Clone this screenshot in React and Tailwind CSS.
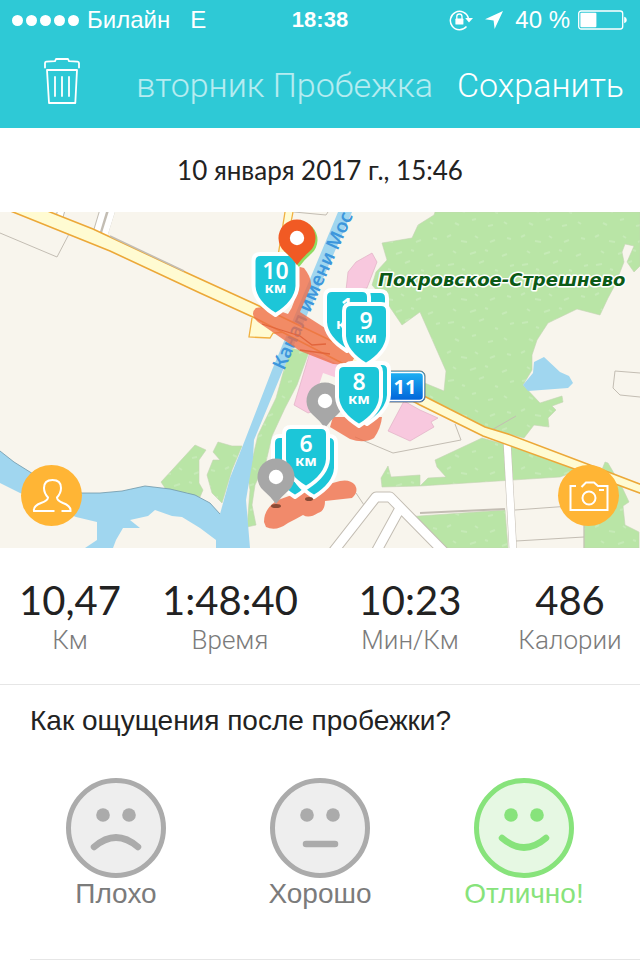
import React, { useState } from 'react';

const STATS = [
    { value: '10,47', label: 'Км' },
    { value: '1:48:40', label: 'Время' },
    { value: '10:23', label: 'Мин/Км' },
    { value: '486', label: 'Калории' },
];

const MOODS = [
    { id: 'bad', label: 'Плохо', mouth: 'M28 69 Q50 50 72 69' },
    { id: 'good', label: 'Хорошо', mouth: 'M36 66 H65' },
    { id: 'great', label: 'Отлично!', mouth: 'M28 60 Q50 79 72 60' },
];

function StatusBar() {
    return (
        <div className="grid grid-cols-[1fr_auto_1fr] items-center h-10 px-3 text-2xl leading-10">
            <div className="flex items-center gap-2">
                <div className="flex gap-[3px]">
                    {[0, 1, 2, 3, 4].map((i) => (
                        <span key={i} className="size-[11px] rounded-full bg-white" />
                    ))}
                </div>
                <span>Билайн</span>
                <span className="ml-3">E</span>
            </div>
            <div className="font-bold text-[22px] leading-10">18:38</div>
            <div className="flex items-center justify-end">
                <svg className="w-6 h-[22px] mr-3" viewBox="0 0 24 22" fill="none">
                    <path d="M17.5 17.6 A9.2 9.2 0 1 1 19.4 9" stroke="white" strokeWidth="1.5" />
                    <path d="M16.2 9 H24 L20 13.5 Z" fill="white" />
                    <rect x="6.4" y="9.6" width="8" height="6" rx="0.6" fill="white" />
                    <path d="M7.8 10 V7.6 a2.6 2.6 0 0 1 5.2 0 V10" stroke="white" strokeWidth="1.3" />
                </svg>
                <svg className="w-[18px] h-[18px] mr-3" viewBox="0 0 18 18">
                    <path d="M18 0 L9.6 18 L8.6 9.4 L0 8.2 Z" fill="white" />
                </svg>
                <span>40 %</span>
                <svg className="w-[50px] h-5 ml-2" viewBox="0 0 50 20" fill="none">
                    <rect x="0.7" y="1" width="44" height="18" rx="2.5" stroke="white" strokeWidth="1.3" />
                    <rect x="2.4" y="2.7" width="16" height="14.6" rx="1" fill="white" />
                    <path d="M46.2 6.8 q2.6 0.6 2.6 3.2 t-2.6 3.2 z" fill="white" />
                </svg>
            </div>
        </div>
    );
}

function Header() {
    return (
        <header className="bg-[#2ec9d6] text-white font-['Liberation_Sans',sans-serif]">
            <StatusBar />
            <div className="flex items-start h-[88px] pl-11 pr-4 pt-[18px] font-['Roboto',sans-serif] font-light text-[34px] leading-[54px]">
                <button type="button" aria-label="Удалить">
                    <svg className="w-9 h-[46px]" viewBox="0 0 36 46" fill="none" stroke="white" strokeWidth="1.8" strokeLinejoin="round" strokeLinecap="round">
                        <path d="M1 9.5 V5 Q1 3.8 2.2 3.6 L11 3.2 L12 1 H24 L25 3.2 L33.6 3.6 Q34.9 3.8 35 5 V9.5" />
                        <path d="M3 12 H33 L31.3 45 H5 Z" />
                        <path d="M11 19 V38 M18 19 V38 M25 19 V38" />
                    </svg>
                </button>
                <h1 className="ml-auto mr-6 text-white/65">вторник Пробежка</h1>
                <button type="button">Сохранить</button>
            </div>
        </header>
    );
}

function Shield({ x, y, km }) {
    return (
        <g transform={`translate(${x} ${y})`}>
            <path
                d="M-15 2 H15 Q22 2 22 9 V34 Q21 50 0 63 Q-21 50 -22 34 V9 Q-22 2 -15 2 Z"
                fill="#1cc6d8"
                stroke="white"
                strokeWidth="4"
                strokeLinejoin="round"
            />
            {km && (
                <text fill="white" textAnchor="middle" className="font-['Noto_Sans',sans-serif]">
                    <tspan x="0" y="27" fontSize="23" fontWeight="600">{km}</tspan>
                    <tspan x="0" y="41" fontSize="15" fontWeight="700">км</tspan>
                </text>
            )}
        </g>
    );
}

function Pin({ x, y, color }) {
    return (
        <g transform={`translate(${x} ${y})`}>
            <path d="M0 27 Q-5 20 -12.5 13.6 A18.5 18.5 0 1 1 12.5 13.6 Q5 20 0 27 Z" fill={color} />
            <circle r="7.2" fill="white" />
        </g>
    );
}

function RouteMap() {
    return (
        <svg className="block w-full" viewBox="0 212 640 336" role="img" aria-label="Маршрут пробежки">
            <defs>
                <pattern id="woods" width="74" height="58" patternUnits="userSpaceOnUse">
                    <rect width="74" height="58" fill="#b9e5a6" />
                    <path
                        d="M3 5l4 -2M17 9l6 1M31 4l3 2M46 10l5 -2M63 6l4 1M9 19l3 2M26 22l6 -2M41 18l3 1M58 24l5 -2M4 33l6 -1M18 37l3 1M35 31l5 -2M51 38l3 1M66 34l4 -1M11 49l4 2M28 46l4 -1M44 52l5 -1M60 48l3 2"
                        stroke="#c5eab6"
                        strokeWidth="2"
                    />
                </pattern>
                <linearGradient id="sign" x1="0" y1="0" x2="0" y2="1">
                    <stop offset="0" stopColor="#1fb4f4" />
                    <stop offset="1" stopColor="#0060d8" />
                </linearGradient>
            </defs>
            <rect y="212" width="640" height="336" fill="#f8f5ed" />

            {/* Woods */}
            <g fill="url(#woods)" stroke="#c5d3b4" strokeWidth="0.6">
                <path d="M435 212 L434 215 L418 225 L412 238 L382 243 L387 260 L376 272 L372 285 L385 300 L402 325 L420 312 L446 371 L444 391 L427 384 L400 372 L420 394 L485 428 L524 438 L534 425 L549 427 L548 418 L556 410 L552 406 L563 402 L562 396 L540 403 L523 385 L532 370 L532 355 L537 340 L548 323 L577 309 L600 315 L608 298 L615 285 L624 262 L622 252 L625 244 L634 246 L627 262 L634 272 L640 266 V212 Z" />
                <path d="M435 460 L482 438 L525 450 L580 470 L560 477 L420 486 L382 487 L381 478 L388 466 L391 477 L420 475 L420 486 L428 478 L446 477 L437 467 Z" />
                <path d="M405 517 L505 510 L508 548 H440 L410 522 Z" />
                <path d="M584 515 L605 462 L608 463 L622 487 L629 502 L623 506 L625 525 L639 532 V548 H584 Z" />
                <path d="M161 482 L195 445 L206 450 L199 460 V483 L203 490 L200 497 L165 488 Z" />
                <path d="M218 442 L232 446 L242 446 L232 470 L222 503 L212 493 L207 475 L213 460 H220 L213 452 Z" />
                <path d="M290 348 L309 352 L297 385 L285 408 L272 436 L266 462 L255 485 L252 505 L256 525 L247 527 L250 490 L248 478 L258 435 L276 398 Z" />
            </g>

            {/* Built-up areas */}
            <g fill="#f8c8de" stroke="#dba9bf" strokeWidth="0.6">
                <path d="M346 290 L348 272 L356 262 L372 253 L377 262 L367 288 Z" />
                <path d="M310 352 L345 368 L350 400 L308 413 L294 405 Z" />
                <path d="M404 401 L420 410 L438 418 L431 422 L434 427 L410 441 L388 431 Z" />
            </g>
            <path d="M323 373 L343 380 L338 392 L318 388 Z" fill="#f8f5ed" />

            {/* Water */}
            <g fill="#a0d6ef">
                <path d="M0 451 L14 462 L30 472 L58 489 L82 493 L100 493 L122 491 L145 486 L170 489 L195 495 L210 503 L220 514 L230 478 L245 440 L272 370 L338 212 H352 L283 370 L254 440 L253 458 L246 500 L250 548 H216 V540 L200 528 L182 517 L172 516 L155 510 L148 516 L130 520 L140 528 H123 L116 540 L113 548 H85 L97 540 V522 L76 517 L20 493 L0 483 Z" />
                <path d="M523 385 L533 373 L534 362 L544 357 L560 372 L569 376 L573 383 L568 388 L528 391 Z" />
            </g>
            <path d="M0 451 L14 462 L30 472 L58 489 L82 493 L100 493 L122 491 L145 486 L170 489 L195 495 L210 503 L220 514" fill="none" stroke="#6f97a8" strokeWidth="0.8" />

            {/* Minor streets */}
            <g fill="none" stroke="#c3bdb3" strokeWidth="1">
                <path d="M0 233 L57 257 L69 234" />
                <path d="M294 212 L326 215 L328 212" />
                <path d="M640 373 L615 371 L613 388 L620 395 L640 397" />
                <path d="M355 437 L393 453 L461 440 L455 424" />
                <path d="M420 513 L505 509" strokeWidth="2" />
                <path d="M515 510 L584 505 M516 541 L584 537 M584 515 V548 M490 431 L516 416 M356 493 L364 505" />
            </g>
            <g fill="none" stroke="#c3bdb3" strokeWidth="11" strokeLinejoin="round">
                <path d="M333 552 L376 497 L390 497 L444 552 M376 552 L399 510" />
                <path d="M507 440 L513 550 M102 240 L112 208 M95 238 L104 208 M58 222 L62 208" strokeWidth="8" />
            </g>
            <g fill="none" stroke="white" strokeWidth="9" strokeLinejoin="round">
                <path d="M333 552 L376 497 L390 497 L444 552 M376 552 L399 510" />
                <path d="M507 440 L513 550" strokeWidth="7" />
                <path d="M103 240 L113 208 M95 238 L104 208 M58 222 L62 208" strokeWidth="6" />
            </g>

            {/* Highways */}
            <path d="M285 212 L275 275 L281 275 L293 212" fill="#fffbd2" stroke="#f0b040" strokeWidth="1.3" />
            <path d="M252 318 L249 337 L270 338 L273 333 L287 332" fill="#fffbd2" stroke="#f0b040" strokeWidth="1.3" />
            <path
                d="M8 210 L110 251 L200 293 L255 318 L340 362 L420 405 L483 436 L580 471 L645 495 V486 L590 465 L508 434 L485 427 L420 394 L340 345 L255 304 L185 272 L93 229 L45 210 Z"
                fill="#fffbd2"
                stroke="#eca838"
                strokeWidth="1.6"
            />
            <path d="M110 236 L184 271" stroke="#c3bdb3" strokeWidth="1.6" />

            <text
                transform="translate(284 371) rotate(-66)"
                fontSize="19"
                fontWeight="600"
                fill="#3d96dc"
                className="font-['Noto_Sans',sans-serif]"
            >
                Канал имени Мос
            </text>

            {/* Track */}
            <g fill="#ee6c46" fillOpacity="0.78">
                <path d="M256 308 Q265 305 288 314 Q298 300 296 280 L296 266 L304 268 Q312 278 311 286 L300 312 L325 328 L358 352 L350 365 L333 364 L300 351 L258 322 Q249 314 256 308 Z" />
                <path d="M333 417 H382 Q381 428 374 438 Q364 444 350 439 L330 427 Z" />
                <path d="M264 522 Q264 508 278 500 L300 492 L340 481 Q350 479 355 485 Q359 492 352 498 L325 501 Q325 511 318 513 Q309 519 303 515 Q296 519 288 523 Q276 532 266 527 Z" />
            </g>
            <path d="M262 324 L300 336 L312 345 L326 344 M300 350 L330 354" fill="none" stroke="#e2653c" strokeWidth="1.3" />

            <text
                x="378"
                y="286"
                fontSize="18"
                fontWeight="700"
                fontStyle="italic"
                fill="#0b5a16"
                stroke="white"
                strokeWidth="3"
                paintOrder="stroke"
                strokeLinejoin="round"
                className="font-['DejaVu_Sans',sans-serif]"
            >
                Покровское-Стрешнево
            </text>

            <rect x="380" y="371" width="45" height="31" rx="5" fill="url(#sign)" stroke="#777" strokeWidth="1" />
            <rect x="381.5" y="372.5" width="42" height="28" rx="4" fill="none" stroke="white" strokeWidth="1.5" />
            <text x="405" y="394" textAnchor="middle" fontSize="20" fontWeight="700" fill="white" className="font-['Noto_Sans',sans-serif]">11</text>

            <Shield x={275.5} y={252} km="10" />
            <Pin x={299} y={240} color="#8fdc62" />
            <Pin x={297} y={238} color="#f15a24" />
            <Shield x={365} y={289} />
            <Shield x={347} y={288} km="1" />
            <Pin x={325} y={401} color="#a7a7a7" />
            <Shield x={367} y={361} />
            <Shield x={359} y={363} km="8" />
            <Shield x={366} y={302} km="9" />
            <Shield x={295} y={434} />
            <Shield x={314} y={434} />
            <Shield x={306} y={425} km="6" />
            <ellipse cx="276" cy="506" rx="5" ry="2" fill="#8a4a35" />
            <ellipse cx="309" cy="499" rx="4" ry="2" fill="#8a4a35" />
            <Pin x={276} y={477} color="#a7a7a7" />
        </svg>
    );
}

function MapButton({ label, className, children }) {
    return (
        <button
            type="button"
            aria-label={label}
            className={`absolute bottom-[22px] size-[61px] rounded-full bg-[#ffb535] grid place-items-center ${className}`}
        >
            <svg className="w-10 h-9" viewBox="0 0 40 36" fill="none" stroke="white" strokeWidth="2">
                {children}
            </svg>
        </button>
    );
}

function Mood({ mood, active, onSelect }) {
    return (
        <label className={`flex flex-col items-center cursor-pointer ${active ? 'text-[#87e37b]' : 'text-[#ababab]'}`}>
            <input
                type="radio"
                name="mood"
                className="sr-only"
                checked={active}
                onChange={() => onSelect(mood.id)}
            />
            <svg className="size-[100px]" viewBox="0 0 100 100" fill="none" stroke="currentColor">
                <circle cx="50" cy="50" r="47.5" strokeWidth="5" fill={active ? '#e6f8e3' : '#eeeeee'} />
                <circle cx="37" cy="37" r="6.8" fill="currentColor" stroke="none" />
                <circle cx="63" cy="37" r="6.8" fill="currentColor" stroke="none" />
                <path d={mood.mouth} strokeWidth="6.5" strokeLinecap="round" />
            </svg>
            <span className={`text-[28px] leading-8 ${active ? '' : 'text-[#7b7b7b]'}`}>{mood.label}</span>
        </label>
    );
}

export default function App() {
    const [mood, setMood] = useState('great');

    return (
        <div className="min-h-screen bg-white text-[#222222] font-['Liberation_Sans',sans-serif]">
            <Header />

            <p className="h-[84px] text-center text-[26px] leading-[84px] font-['Lato','Liberation_Sans',sans-serif]">
                10 января 2017 г., 15:46
            </p>

            <div className="relative">
                <RouteMap />
                <MapButton label="Профиль" className="left-[21px]">
                    <path d="M22.5 33 H2 Q1 28 9 25 Q16 22.5 16 19.5 Q12 15 12 10 Q12 2 20.5 2 Q29 2 29 10 Q29 15 25 19.5 Q25 22.5 31 25 Q39 28 38.5 33 H29.5" />
                </MapButton>
                <MapButton label="Камера" className="right-[21px]">
                    <path d="M7 8 H1.5 V32 H38.5 V8 H29 L25 4.5 H17 L12.5 9" />
                    <circle cx="20" cy="20" r="6.5" />
                    <path d="M30 12 H35" />
                </MapButton>
            </div>

            <dl className="grid grid-cols-[7fr_9fr_9fr_7fr] py-7 border-b border-[#e6e6e6] text-center">
                {STATS.map((s) => (
                    <div key={s.label} className="flex flex-col-reverse">
                        <dt className="text-[26px] leading-8 font-['Roboto',sans-serif] font-light text-[#7b7b7b]">{s.label}</dt>
                        <dd className="text-[40px] leading-12 font-['Lato',sans-serif]">{s.value}</dd>
                    </div>
                ))}
            </dl>

            <fieldset>
                <legend className="px-[30px] pt-5 text-[28px] leading-8">Как ощущения после пробежки?</legend>
                <div className="grid grid-cols-3 px-3.5 pt-[41px] pb-[49px]">
                    {MOODS.map((m) => (
                        <Mood key={m.id} mood={m} active={mood === m.id} onSelect={setMood} />
                    ))}
                </div>
            </fieldset>
            <hr className="ml-[30px] border-[#e6e6e6]" />
        </div>
    );
}
